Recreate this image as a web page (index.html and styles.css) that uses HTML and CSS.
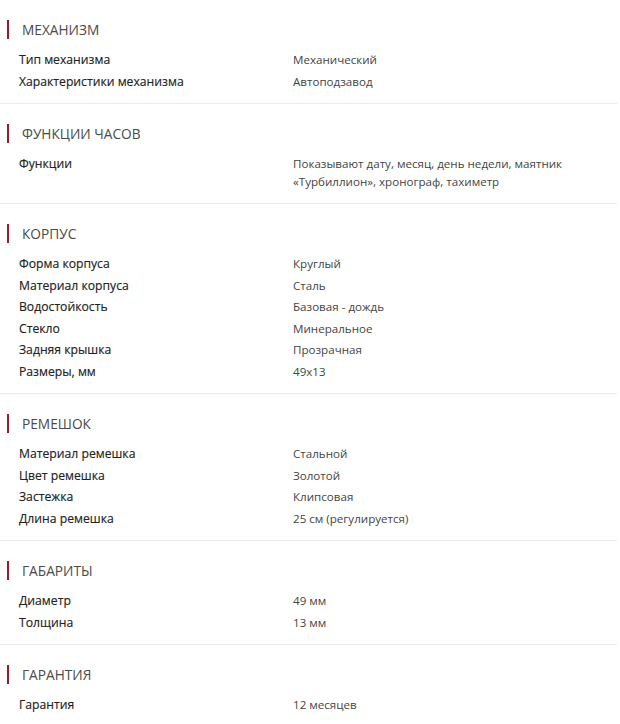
FILE: index.html
```html
<!DOCTYPE html>
<html lang="ru">
<head>
<meta charset="utf-8">
<link rel="stylesheet" href="styles.css">
</head>
<body>
<div class="specs">
  <section class="group">
    <h3 class="group-title">Механизм</h3>
    <div class="row"><div class="label">Тип механизма</div><div class="value">Механический</div></div>
    <div class="row"><div class="label">Характеристики механизма</div><div class="value">Автоподзавод</div></div>
  </section>
  <section class="group">
    <h3 class="group-title">Функции часов</h3>
    <div class="row"><div class="label">Функции</div><div class="value">Показывают дату, месяц, день недели, маятник «Турбиллион», хронограф, тахиметр</div></div>
  </section>
  <section class="group">
    <h3 class="group-title">Корпус</h3>
    <div class="row"><div class="label">Форма корпуса</div><div class="value">Круглый</div></div>
    <div class="row"><div class="label">Материал корпуса</div><div class="value">Сталь</div></div>
    <div class="row"><div class="label">Водостойкость</div><div class="value">Базовая - дождь</div></div>
    <div class="row"><div class="label">Стекло</div><div class="value">Минеральное</div></div>
    <div class="row"><div class="label">Задняя крышка</div><div class="value">Прозрачная</div></div>
    <div class="row"><div class="label">Размеры, мм</div><div class="value">49x13</div></div>
  </section>
  <section class="group">
    <h3 class="group-title">Ремешок</h3>
    <div class="row"><div class="label">Материал ремешка</div><div class="value">Стальной</div></div>
    <div class="row"><div class="label">Цвет ремешка</div><div class="value">Золотой</div></div>
    <div class="row"><div class="label">Застежка</div><div class="value">Клипсовая</div></div>
    <div class="row"><div class="label">Длина ремешка</div><div class="value">25 см (регулируется)</div></div>
  </section>
  <section class="group">
    <h3 class="group-title">Габариты</h3>
    <div class="row"><div class="label">Диаметр</div><div class="value">49 мм</div></div>
    <div class="row"><div class="label">Толщина</div><div class="value">13 мм</div></div>
  </section>
  <section class="group">
    <h3 class="group-title">Гарантия</h3>
    <div class="row"><div class="label">Гарантия</div><div class="value">12 месяцев</div></div>
  </section>
</div>
</body>
</html>
```
FILE: styles.css
```css
html, body {
  margin: 0;
  padding: 0;
  background: #fff;
}
body {
  font-family: "Open Sans", "Noto Sans", sans-serif;
  font-size: 12px;
  color: #333;
}
.specs {
  width: 617px;
}
.group {
  border-bottom: 1px solid #ebebeb;
  padding: 20px 0 11px;
}
.group:last-child {
  border-bottom: none;
}
.group-title {
  margin: 0 0 10px 7px;
  padding-left: 13px;
  border-left: 2px solid #a3172b;
  font-size: 13.7px;
  font-weight: 400;
  text-transform: uppercase;
  color: #4a4a4a;
  line-height: 19px;
}
.row {
  display: flex;
  padding: 2px 0 2px 19px;
  line-height: 17.5px;
}
.label {
  width: 274px;
  flex: none;
  font-size: 12.2px;
  color: #222;
  -webkit-text-stroke: 0.15px #222;
}
.value {
  flex: 1;
  font-size: 11.6px;
  color: #444;
  padding-right: 40px;
}
```
